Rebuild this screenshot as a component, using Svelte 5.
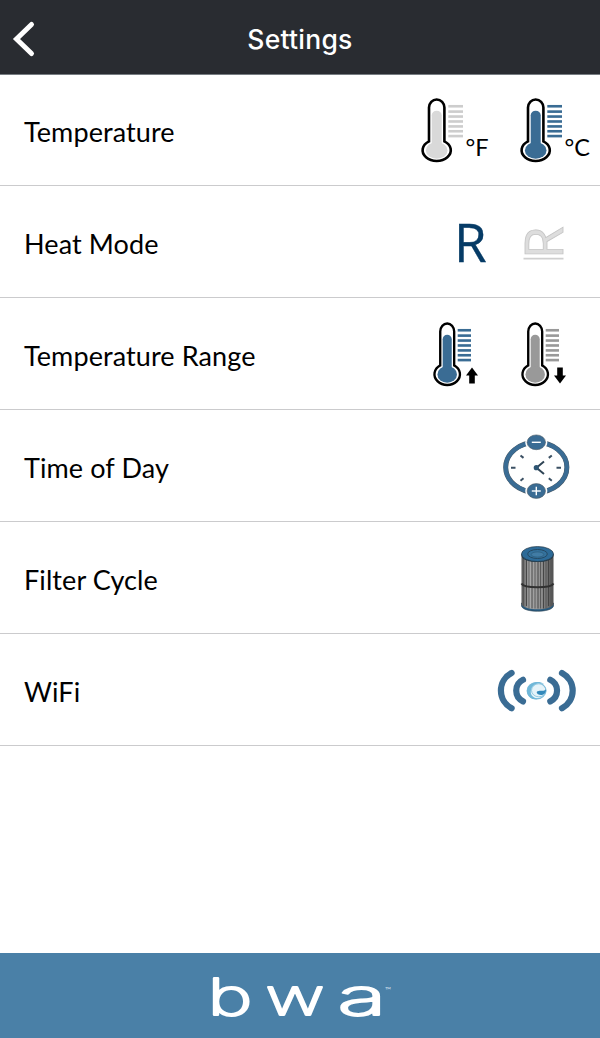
<script lang="ts">
  const barRows = [8.2, 13.5, 18.4, 23.3, 28.2, 33, 37.8];
  const pleats = [2.5, 5.5, 8, 11, 14, 17, 19.5, 22.5, 25, 27.5, 30];
  const blue = '#3a6c94';
</script>

{#snippet thermometer(fill: string, bars: string, narrow: boolean)}
  <svg class="thermometer" class:narrow viewBox="0 0 42 65" preserveAspectRatio="none">
    <path
      d="M8 43V9.5a7.7 8 0 0 1 15.4 0V43A14.1 10.6 0 1 1 8 43Z"
      fill="#fff"
      stroke="#000"
      stroke-width="2.6"
    />
    <path d="M10.7 47V17a5 4.3 0 0 1 10 0V47Z" {fill} />
    <ellipse cx="15.7" cy="52" rx="10.8" ry="8.2" {fill} />
    {#each barRows as y}
      <path d="M27.3 {y}H42" stroke={bars} stroke-width="2.6" />
    {/each}
  </svg>
{/snippet}

<div class="screen">
  <header>
    <button class="back" aria-label="Back">
      <svg width="24" height="36" viewBox="0 0 24 36">
        <path d="M19.5 3.5L4.5 18L19.5 32.5" fill="none" stroke="#fff" stroke-width="5" stroke-linecap="round" />
      </svg>
    </button>
    <h1>Settings</h1>
  </header>

  <main>
    <div class="row">
      <span class="label">Temperature</span>
      <div class="icons units">
        <div class="option">
          {@render thermometer('#d9d9d9', '#cdcdcd', false)}
          <span class="unit">°F</span>
        </div>
        <div class="option">
          {@render thermometer(blue, blue, false)}
          <span class="unit">°C</span>
        </div>
      </div>
    </div>

    <div class="row">
      <span class="label">Heat Mode</span>
      <div class="icons modes">
        <svg width="36" height="80" viewBox="0 -15 36 80">
          <text class="ready" x="-1" y="44">R</text>
        </svg>
        <svg width="60" height="80" viewBox="-16 -15 60 80">
          <text class="rest" transform="translate(40 41) rotate(-90)">R</text>
          <path d="M.5 40.6H40.5" stroke="#cfcfcf" stroke-width="1.8" />
        </svg>
      </div>
    </div>

    <div class="row">
      <span class="label">Temperature Range</span>
      <div class="icons ranges">
        <div class="option">
          {@render thermometer(blue, blue, true)}
          <svg class="arrow" width="12" height="17" viewBox="0 0 12 17">
            <path d="M6 .5L12 8.5H8.8V16.5H3.2V8.5H0Z" />
          </svg>
        </div>
        <div class="option">
          {@render thermometer('#999', '#999', true)}
          <svg class="arrow" width="12" height="17" viewBox="0 0 12 17">
            <path d="M6 16.5L12 8.5H8.8V.5H3.2V8.5H0Z" />
          </svg>
        </div>
      </div>
    </div>

    <div class="row">
      <span class="label">Time of Day</span>
      <div class="icons clock">
        <svg width="67" height="65" viewBox="0 0 67 65">
          <ellipse cx="33.3" cy="32.3" rx="30.6" ry="25" fill="none" stroke="#4d5a64" stroke-width="5" />
          <ellipse cx="33.3" cy="32.3" rx="30.6" ry="25" fill="none" stroke={blue} stroke-width="4.2" />
          {#each [7.3, 56] as y}
            <ellipse cx="33.3" cy={y} rx="11" ry="9.4" fill="#fff" />
            <ellipse cx="33.3" cy={y} rx="9.2" ry="7.4" fill={blue} stroke="#4d5a64" stroke-width=".6" />
            <path d="M28.8 {y}H37.8" stroke="#fff" stroke-width="1.4" />
          {/each}
          <path d="M33.3 51.8V60.2" stroke="#fff" stroke-width="1.4" />
          <path
            d="M8 32.7H12.5M53.5 32.7H58M17.5 20.5L20.5 22.9M48.8 20.5L45.8 22.9M17.5 45.7L20.5 43.3M48.8 45.7L45.8 43.3"
            stroke="#3b5063"
            stroke-width="2"
          />
          <path d="M41 26.5L33.5 32.7L41 38.9" fill="none" stroke="#2f4455" stroke-width="2" />
          <circle cx="33.3" cy="32.7" r="2.6" fill="#2f5674" />
        </svg>
      </div>
    </div>

    <div class="row">
      <span class="label">Filter Cycle</span>
      <div class="icons filter">
        <svg width="33" height="66" viewBox="0 0 33 66">
          <defs>
            <linearGradient id="body">
              <stop offset="0" stop-color="#555" />
              <stop offset=".25" stop-color="#aaa" />
              <stop offset=".6" stop-color="#909090" />
              <stop offset="1" stop-color="#505050" />
            </linearGradient>
          </defs>
          <path d="M.5 57V60C2 67 31 67 32.5 60V57Z" fill="#285b80" stroke="#263b49" stroke-width=".6" />
          <path d="M.5 8V58C2 65 31 65 32.5 58V8Z" fill="url(#body)" />
          {#each pleats as x, i}
            <path d="M{x} 12V{i < 2 || i > 8 ? 60 : 62.5}" stroke={i % 2 ? '#404040' : '#555'} stroke-width=".9" />
          {/each}
          <path d="M.5 37.5C3 42.5 30 42.5 32.5 37.5" fill="none" stroke="#303030" stroke-width="2" />
          <path d="M.5 8V10C2 18 31 18 32.5 10V8Z" fill="#263b49" />
          <ellipse cx="16.5" cy="8" rx="16" ry="7.5" fill="#2d6b98" stroke="#263b49" stroke-width=".7" />
          <ellipse cx="16.5" cy="8" rx="9.8" ry="4.5" fill="#34729d" stroke="#254963" stroke-width="1" />
          <ellipse cx="16.5" cy="8.5" rx="6.3" ry="2.6" fill="#417ca5" stroke="#2c5b7b" stroke-width=".7" />
        </svg>
      </div>
    </div>

    <div class="row">
      <span class="label">WiFi</span>
      <div class="icons wifi">
        <svg width="79" height="44" viewBox="0 0 79 44">
          <g fill="none" stroke={blue} stroke-width="6.2" stroke-linecap="round">
            <path d="M13.6 3.9A20 20 0 0 0 13.6 39.3" />
            <path d="M25 10.8A12 12 0 0 0 25 32.4" />
            <path d="M52.3 10.8A12 12 0 0 1 52.3 32.4" />
            <path d="M64 3.9A20 20 0 0 1 64 39.3" />
          </g>
          <ellipse cx="38.5" cy="21.7" rx="9.4" ry="8.2" fill="#e5f3f9" stroke="#7dbbda" stroke-width="1.1" />
          <path d="M46 15C39 10 28.8 15 29 22C29.3 28.5 35 31.5 40 29.7C34 28.6 32 25 33 21C34.5 15.5 40 13 46 15Z" fill="#6fb7d8" />
          <ellipse cx="40.8" cy="21.3" rx="7.3" ry="6.5" fill="none" stroke="#83c0dc" stroke-width=".8" />
          <path d="M39 22.5C42.5 20.5 45 23 48 20.5C48 26 43 27 40 25.2C38.8 24.5 38.5 23.5 39 22.5Z" fill="#3289bb" />
        </svg>
      </div>
    </div>
  </main>

  <footer>
    <svg width="200" height="85" viewBox="0 -17 200 85" role="img" aria-label="bwa">
      <g class="brand">
        <text transform="translate(-1.6 44.8)" textLength="45" lengthAdjust="spacingAndGlyphs">b</text>
        <text transform="translate(56.5 44.8)" textLength="59" lengthAdjust="spacingAndGlyphs">w</text>
        <text transform="translate(128.5 44.8)" textLength="49" lengthAdjust="spacingAndGlyphs">a</text>
      </g>
      <text class="mark" x="176" y="23">™</text>
    </svg>
  </footer>
</div>

<style>
  :global(body) {
    margin: 0;
    background: #fff;
  }

  .screen {
    display: flex;
    flex-direction: column;
    height: 1038px;
    font-family: Lato, sans-serif;
    color: #000;
  }

  header {
    display: grid;
    grid-template-columns: 60px 1fr 60px;
    align-items: center;
    height: 74px;
    flex-shrink: 0;
    padding-top: 4px;
    box-sizing: border-box;
    background: #292c31;
    box-shadow: 0 1px 0 #777d82;
    z-index: 1;
  }

  .back {
    display: flex;
    padding: 0 0 0 12px;
    border: 0;
    background: none;
  }

  h1 {
    margin: 0;
    font: 500 26.5px/36px Inter, sans-serif;
    letter-spacing: 0.25px;
    text-align: center;
    color: #fff;
  }

  main {
    flex: 1;
  }

  .row {
    display: flex;
    align-items: center;
    justify-content: space-between;
    height: 112px;
    box-sizing: border-box;
    padding-left: 24px;
    border-bottom: 1px solid #cbcbcd;
  }

  .label {
    font-size: 27px;
    line-height: 34px;
    letter-spacing: 0.1px;
    padding-top: 5px;
  }

  .icons,
  .option {
    display: flex;
  }

  svg {
    display: block;
    flex-shrink: 0;
    overflow: visible;
  }

  .thermometer {
    width: 42px;
    height: 65.5px;
  }

  .thermometer.narrow {
    width: 38px;
  }

  .units {
    padding: 3px 10px 0 0;
  }

  .units .option {
    width: 99px;
  }

  .units .option:last-child {
    width: 70.5px;
  }

  .unit {
    align-self: flex-end;
    margin-left: 3px;
    padding-bottom: 3px;
    font-size: 23.5px;
    line-height: 28px;
  }

  .modes {
    gap: 16px;
    padding: 2px 33px 0 0;
  }

  .ready {
    font: 400 53px 'Open Sans', sans-serif;
    fill: #063b66;
    stroke: #063b66;
    stroke-width: 0.3;
  }

  .rest {
    font: 400 53px 'Open Sans', sans-serif;
    fill: #ddd;
    stroke: #c4c4c4;
    stroke-width: 0.8;
  }

  .ranges {
    gap: 43px;
    padding: 3px 34px 0 0;
  }

  .arrow {
    align-self: flex-end;
    margin: 0 0 4px -5px;
  }

  .clock {
    padding: 3px 30px 0 0;
  }

  .filter {
    padding: 2px 46.5px 0 0;
  }

  .wifi {
    padding: 3px 23.5px 0 0;
  }

  footer {
    display: flex;
    align-items: center;
    height: 85px;
    box-sizing: border-box;
    padding-left: 209px;
    background: #4a80a7;
  }

  .brand {
    font: 200 50px Inter, sans-serif;
    fill: #fff;
    stroke: #fff;
    stroke-width: 2;
    stroke-linejoin: round;
  }

  .mark {
    font: 8px Lato, sans-serif;
    fill: #c7dae8;
  }
</style>
